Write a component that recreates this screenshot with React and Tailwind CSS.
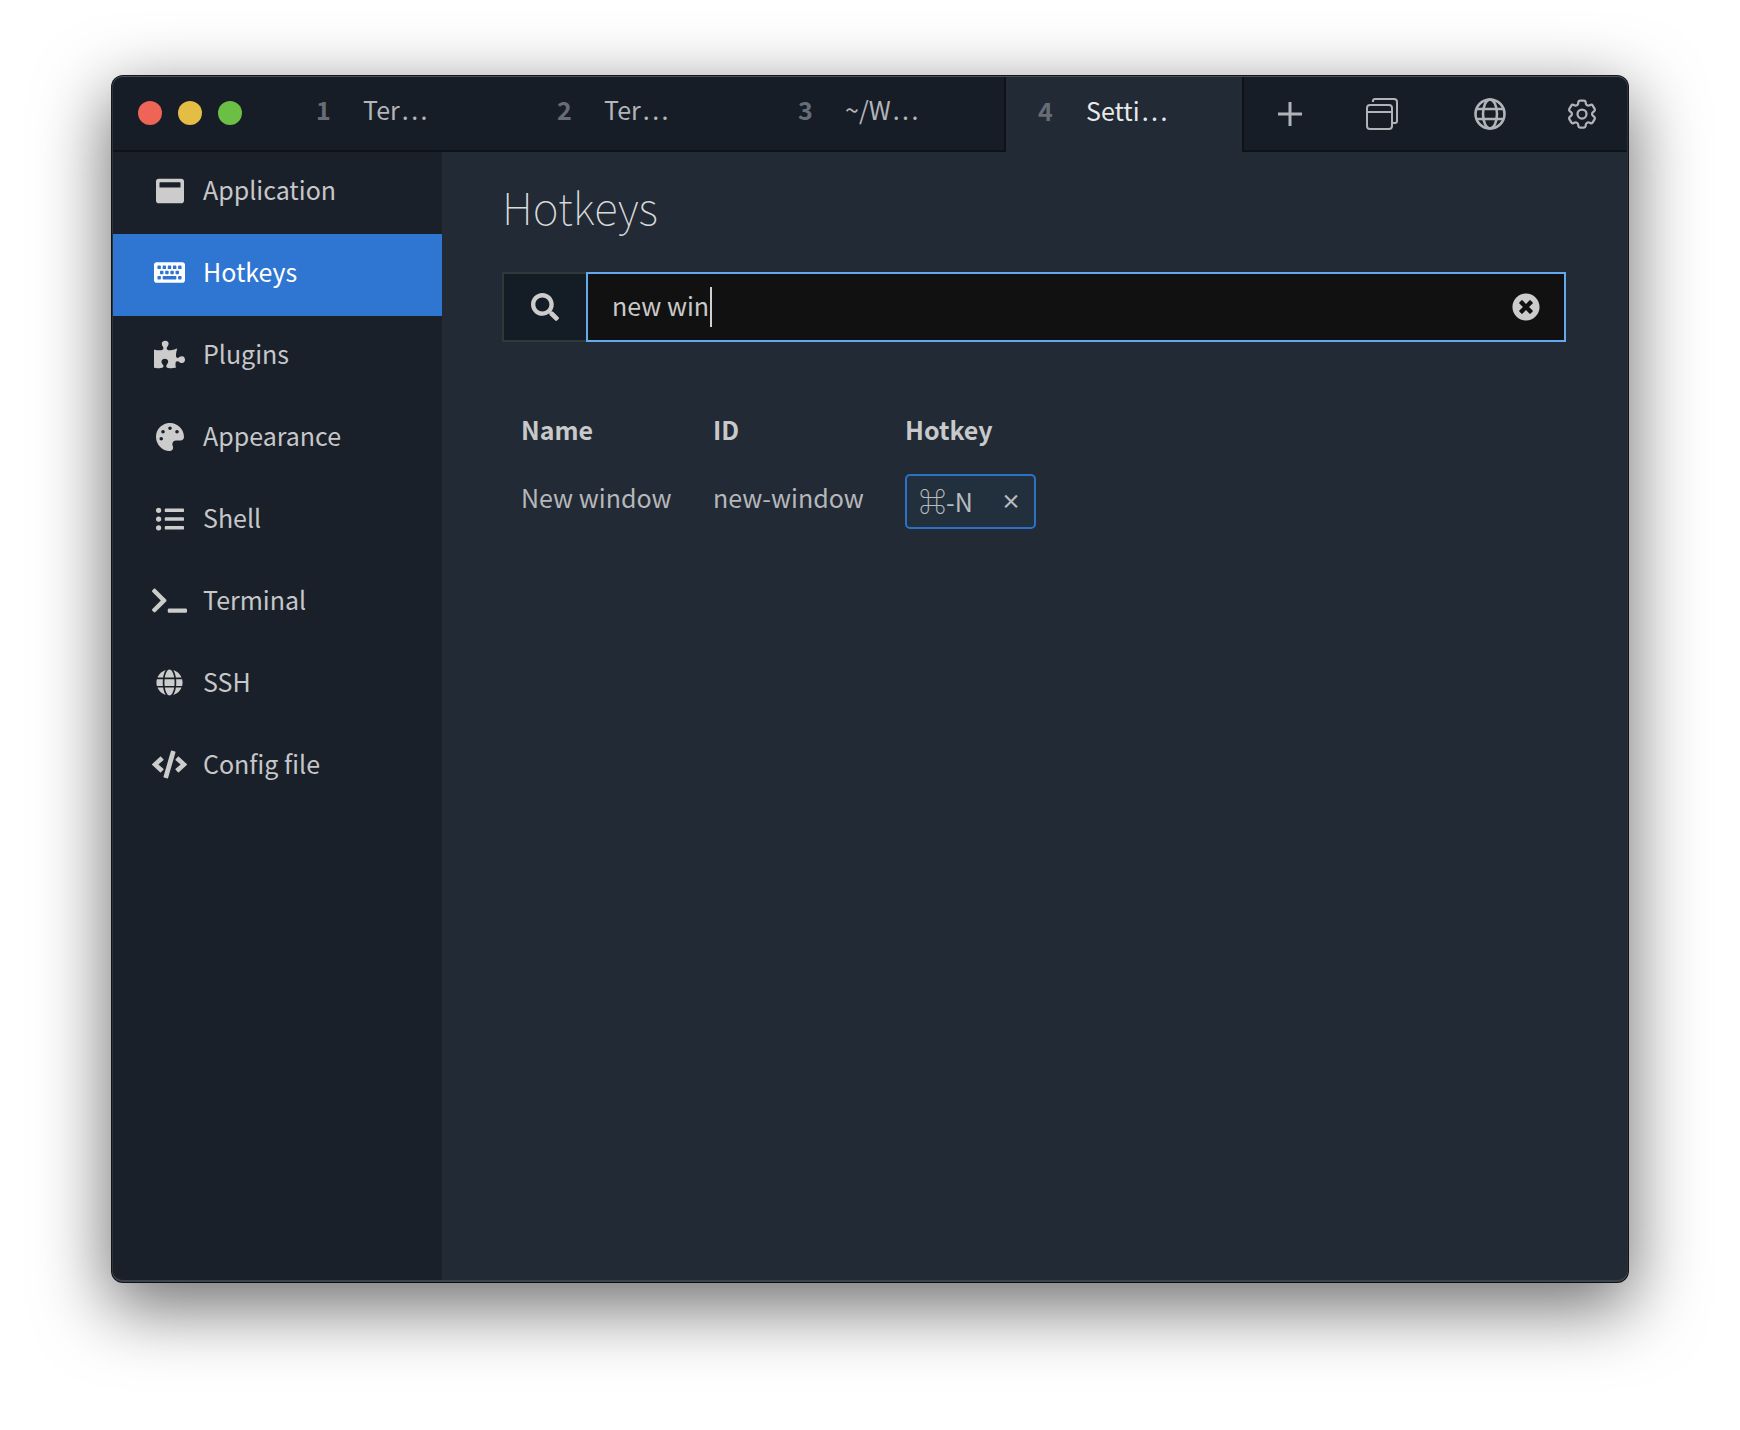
import React from "react";
import { FaWindowMaximize, FaKeyboard, FaPuzzlePiece, FaPalette, FaListUl, FaTerminal, FaGlobe, FaCode, FaSearch, FaTimesCircle } from "react-icons/fa";
import { HiOutlineCog6Tooth } from "react-icons/hi2";

const items = [
  ["Application", FaWindowMaximize, 28],
  ["Hotkeys", FaKeyboard, 31],
  ["Plugins", FaPuzzlePiece, 31],
  ["Appearance", FaPalette, 28],
  ["Shell", FaListUl, 28],
  ["Terminal", FaTerminal, 35],
  ["SSH", FaGlobe, 27],
  ["Config file", FaCode, 35],
];
const tabs = [
  ["1", "Ter"],
  ["2", "Ter"],
  ["3", "~/W"],
];

function Tab({ n, label }) {
  return (
    <div className="w-[241px] shrink-0 h-full flex items-center pl-[34px] border-b-2 border-[#0f1318]">
      <span className="w-[47px] text-[25px] font-bold text-[#666d76] -mt-[6px]">{n}</span>
      <span className="text-[25px] text-[#b3b5b8] -mt-[6px]">{label}<span className="tracking-[2.5px] ml-[2px]">...</span></span>
    </div>
  );
}

export default function App() {
  return (
    <div className="w-[1740px] h-[1430px] bg-white overflow-hidden pt-[76px] pl-[112px]" style={{ fontFamily: '"Noto Sans CJK SC", "Noto Sans", sans-serif' }}>
      <div className="relative w-[1516px] h-[1206px] rounded-[11px] overflow-hidden flex flex-col bg-[#222a35] shadow-[0_22px_70px_4px_rgba(0,0,0,0.56),0_0_0_1px_#1a1a1a] after:absolute after:inset-0 after:pointer-events-none after:rounded-[11px] after:shadow-[inset_0_1px_0_#4b5058,inset_0_-2px_0_#3d444d,inset_1px_0_0_#2c323a,inset_-1px_0_0_#2c323a]">
        <div className="h-[76px] flex bg-[#161d27] shrink-0">
          <div className="w-[170px] shrink-0 flex items-center gap-4 pl-[26px] border-b-2 border-[#0f1318]">
            <span className="w-6 h-6 rounded-full bg-[#ee6557]" />
            <span className="w-6 h-6 rounded-full bg-[#e4bd45]" />
            <span className="w-6 h-6 rounded-full bg-[#6cbf45]" />
          </div>
          {tabs.map(([n, l]) => <Tab key={n} n={n} label={l} />)}
          <div className="w-[240px] shrink-0 -ml-[1px] h-full flex items-center pl-[32px] bg-[#222a35] border-x-2 border-[#0f1318]">
            <span className="w-[48px] text-[25px] font-bold text-[#666d76] -mt-[6px]">4</span>
            <span className="text-[25px] text-[#e8e9ea] -mt-[6px]">Setti<span className="tracking-[2.5px] ml-[2px]">...</span></span>
          </div>
          <div className="flex-1 flex items-center pt-[1px] border-b-2 border-[#0f1318] text-[#b0b3b8]">
            <svg className="ml-[34px] w-[24px] h-[24px]" viewBox="0 0 24 24" fill="none" stroke="currentColor" strokeWidth="3"><path d="M12 0v24M0 12h24" /></svg>
            <svg className="ml-[64px] w-[32px] h-[32px]" viewBox="0 0 32 32" fill="none" stroke="currentColor" strokeWidth="2"><rect x="1" y="7" width="25" height="24" rx="3" /><path d="M1 14h25M7 4V3a2 2 0 0 1 2-2h19a3 3 0 0 1 3 3v19a2 2 0 0 1-2 2h-3" /></svg>
            <svg className="ml-[76px] w-[32px] h-[32px]" viewBox="0 0 32 32" fill="none" stroke="currentColor" strokeWidth="2.6"><circle cx="16" cy="16" r="14.5" /><ellipse cx="16" cy="16" rx="7" ry="14.5" /><path d="M3 11h26M3 21h26" /></svg>
            <HiOutlineCog6Tooth className="ml-[58px]" size={36} strokeWidth={1.5} />
          </div>
        </div>
        <div className="flex-1 flex min-h-0">
          <div className="w-[330px] bg-[#1a2029] shrink-0">
            {items.map(([label, Icon, size]) => {
              const active = label === "Hotkeys";
              return (
                <div key={label} className={"h-[82px] flex items-center " + (active ? "bg-[#2f76d2] text-white" : "text-[#c6c7c9]")}>
                  <div className="w-[91px] pl-[24px] flex justify-center -mt-[5px]"><Icon size={size} className={"shrink-0 " + (active ? "text-white" : "text-[#cccccc]")} /></div>
                  <span className="text-[25px] -mt-[7px]">{label}</span>
                </div>
              );
            })}
          </div>
          <div className="flex-1 pl-[60px] pr-[62px]">
            <h1 className="text-[44px] font-thin text-[#d8d9db] h-[120px] pt-[20px] leading-[68px]">Hotkeys</h1>
            <div className="flex h-[70px]">
              <div className="w-[84px] flex items-center justify-center bg-[#141c26] border-2 border-r-0 border-[#2d3a3c] text-[#cccccc]"><FaSearch size={28} /></div>
              <div className="flex-1 flex items-center bg-[#111111] border-2 border-[#64a9ee] pl-[24px] pr-[24px]">
                <span className="text-[25px] text-[#c8c9ca] leading-none -mt-[3px]">new win</span>
                <span className="w-[2px] h-[40px] ml-[1px] bg-[#d0d0d0]" />
                <FaTimesCircle size={28} className="ml-auto text-[#cccccc]" />
              </div>
            </div>
            <div className="mt-[68px] ml-[19px] grid grid-cols-[192px_192px_auto] justify-start">
              <div className="text-[25px] font-bold text-[#c8c9ca] h-[64px] leading-[38px]">Name</div>
              <div className="text-[25px] font-bold text-[#c8c9ca] leading-[38px]">ID</div>
              <div className="text-[25px] font-bold text-[#c8c9ca] leading-[38px]">Hotkey</div>
              <div className="text-[25px] text-[#b5b7b9] leading-[46px]">New window</div>
              <div className="text-[25px] text-[#b5b7b9] leading-[46px]">new-window</div>
              <div className="w-[131px] h-[55px] flex items-center rounded-[5px] border-2 border-[#2a72c8] bg-[#22303e] pl-[12px] pr-[13px] text-[#b9bbbd]">
                <span className="text-[27px]">⌘</span><span className="text-[25px]">-N</span>
                <span className="ml-auto text-[20px] font-bold -mt-[2px]">×</span>
              </div>
            </div>
          </div>
        </div>
      </div>
    </div>
  );
}
